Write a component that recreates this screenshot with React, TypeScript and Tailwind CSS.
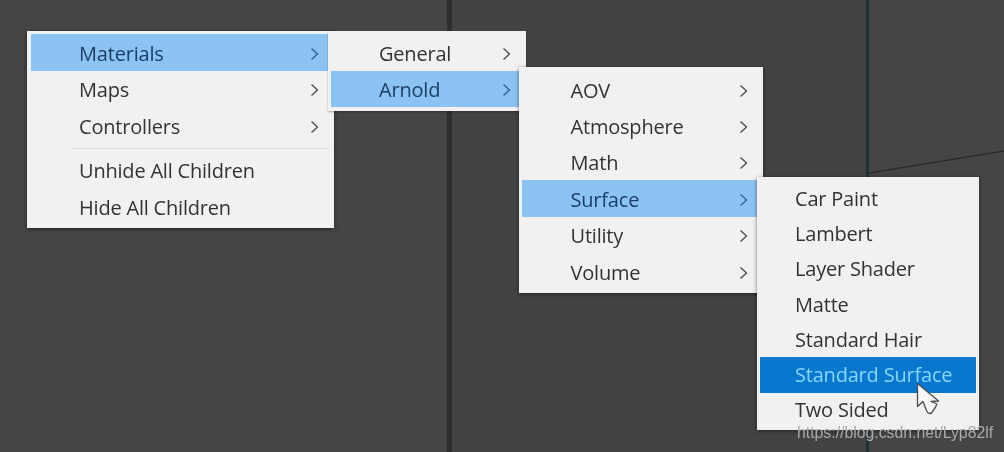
const FONT = "font-['Open_Sans','Noto_Sans',sans-serif]";

type Item = { label: string; arrow?: boolean; state?: "hover" | "active" };

function Chevron({ className }: { className: string }) {
  return (
    <svg width="9" height="14" viewBox="0 0 9 14" fill="none" className={className}>
      <path d="M1.5 1.5 7.5 7 1.5 12.5" stroke="currentColor" strokeWidth="1.3" />
    </svg>
  );
}

function MenuRow({ item, rowClass, textPad, arrowPad }: { item: Item; rowClass: string; textPad: string; arrowPad: string }) {
  const bg = item.state === "hover" ? "bg-[#8bc4f3]" : item.state === "active" ? "bg-[#0a77cf]" : "";
  const color = item.state === "hover" ? "text-[#1b3f66]" : item.state === "active" ? "text-[#86d6f8]" : "text-[#333333]";
  return (
    <div className={`flex items-center justify-between ${rowClass} ${bg} ${textPad} ${arrowPad}`}>
      <span className={color}>{item.label}</span>
      {item.arrow && <Chevron className={item.state === "hover" ? "text-[#2f5f8c]" : "text-[#4a4a4a]"} />}
    </div>
  );
}

const materials: Item[] = [
  { label: "Materials", arrow: true, state: "hover" },
  { label: "Maps", arrow: true },
  { label: "Controllers", arrow: true },
];
const children: Item[] = [{ label: "Unhide All Children" }, { label: "Hide All Children" }];
const groups: Item[] = [{ label: "General", arrow: true }, { label: "Arnold", arrow: true, state: "hover" }];
const arnold: Item[] = [
  { label: "AOV", arrow: true },
  { label: "Atmosphere", arrow: true },
  { label: "Math", arrow: true },
  { label: "Surface", arrow: true, state: "hover" },
  { label: "Utility", arrow: true },
  { label: "Volume", arrow: true },
];
const surface: Item[] = [
  { label: "Car Paint" },
  { label: "Lambert" },
  { label: "Layer Shader" },
  { label: "Matte" },
  { label: "Standard Hair" },
  { label: "Standard Surface", state: "active" },
  { label: "Two Sided" },
];

export default function App() {
  return (
    <div className={`relative w-[1004px] h-[452px] overflow-hidden bg-[#444445] blur-[0.35px] ${FONT} text-[20px] tracking-[-0.2px]`}>
      {/* viewport panels behind the menus */}
      <div className="flex h-full">
        <div className="w-[447px] bg-[#454545]" />
        <div className="w-[5px] bg-[#2e2e2f]" />
        <div className="w-[414px] bg-[#434344]" />
        <div className="w-[3px] bg-[#1d3038]" />
        <div className="flex-1 bg-[#454546]" />
      </div>
      <svg className="absolute left-[869px] top-[148px]" width="135" height="26" viewBox="0 0 135 26" fill="none">
        <path d="M0 25 135 3" stroke="#222224" strokeWidth="1.2" />
      </svg>

      {/* Root menu */}
      <div className="absolute left-[27px] top-[31px] w-[307px] h-[197px] bg-[#f1f1f2] pt-[3px] pl-[4px] pr-[5px] shadow-[0_1px_4px_rgba(0,0,0,0.5)]">
        {materials.map((item) => (
          <MenuRow key={item.label} item={item} rowClass="h-[36.5px] pt-[3px]" textPad="pl-[48px]" arrowPad="pr-[10px]" />
        ))}
        <div className="h-[9.5px] flex items-center pl-[42px]">
          <div className="h-px w-full bg-[#dcdcdc]" />
        </div>
        {children.map((item) => (
          <MenuRow key={item.label} item={item} rowClass="h-[36.5px]" textPad="pl-[48px]" arrowPad="pr-[10px]" />
        ))}
      </div>

      {/* Group submenu */}
      <div className="absolute left-[328px] top-[31px] w-[198px] h-[80px] bg-[#f1f1f2] pt-[3px] pl-[3px] pr-[7px] shadow-[0_1px_2px_rgba(0,0,0,0.3)]">
        {groups.map((item) => (
          <MenuRow key={item.label} item={item} rowClass="h-[36.5px] pt-[3px]" textPad="pl-[48px]" arrowPad="pr-[8px]" />
        ))}
      </div>

      {/* Arnold submenu */}
      <div className="absolute left-[519px] top-[67px] w-[244px] h-[226px] bg-[#f1f1f2] pt-[4px] pl-[3px] pr-[6px] shadow-[0_1px_4px_rgba(0,0,0,0.5)]">
        {arnold.map((item) => (
          <MenuRow key={item.label} item={item} rowClass="h-[36.4px] pt-[3px]" textPad="pl-[48.5px]" arrowPad="pr-[9px]" />
        ))}
      </div>

      {/* Surface submenu */}
      <div className="absolute left-[757px] top-[177px] w-[222px] h-[253px] bg-[#f1f1f2] pt-[4px] px-[3px] shadow-[0_1px_4px_rgba(0,0,0,0.5)]">
        {surface.map((item) => (
          <MenuRow key={item.label} item={item} rowClass="h-[35.3px]" textPad="pl-[35px]" arrowPad="pr-[4px]" />
        ))}
      </div>

      {/* Mouse cursor */}
      <svg className="absolute left-[915px] top-[382px]" width="26" height="34" viewBox="0 0 26 34" fill="none">
        <path
          d="M2.5 1.5V24.5L8 19.5 11.5 28.5 13 31 16 31.5 20 26 22 22 16 19.5 23.5 19Z"
          fill="#f7f7f8"
          stroke="#4a4f55"
          strokeWidth="1.3"
          strokeLinejoin="round"
        />
      </svg>

      <div className="absolute left-[797px] top-[423px] font-['Liberation_Sans',sans-serif] text-[15.8px] tracking-normal leading-[20px] text-[#a9a9aa]">
        https://blog.csdn.net/Lyp82lf
      </div>
    </div>
  );
}
